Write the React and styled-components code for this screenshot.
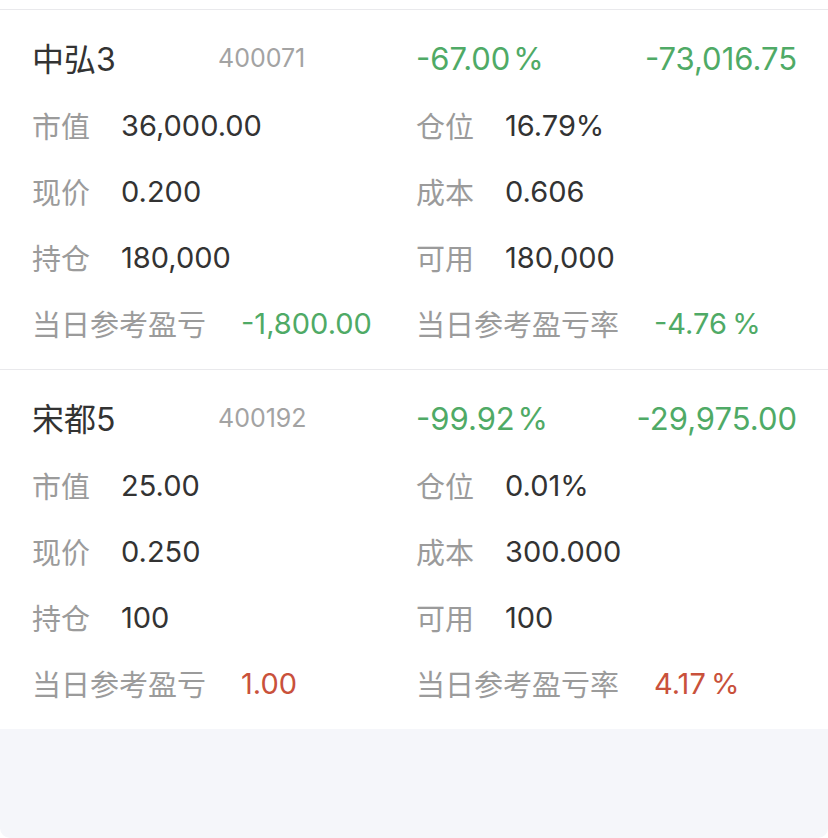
import React from "react";
import styled, { createGlobalStyle } from "styled-components";

const GlobalStyle = createGlobalStyle`
  html, body { margin: 0; padding: 0; background: #ffffff; }
  body { font-family: "Inter", "Noto Sans CJK SC", sans-serif; -webkit-font-smoothing: antialiased; }
  * { box-sizing: border-box; }
`;

const Page = styled.div`
  height: 838px;
  background: #f5f6fa;
  border-radius: 0 0 10px 10px;
  overflow: hidden;
  display: flex;
  flex-direction: column;
`;

const TopSpacer = styled.div`
  height: 9px;
  background: #ffffff;
`;

const Card = styled.section`
  background: #ffffff;
  border-top: 1px solid #e9e9ec;
  padding: 14px 0 13px;
`;

const TitleRow = styled.div`
  display: grid;
  grid-template-columns: 414px 414px;
  height: 68px;
  align-items: center;
`;

const TitleLeft = styled.div`
  display: flex;
  align-items: center;
  padding-left: 32px;
`;

const Name = styled.span`
  width: 186px;
  font-size: 32px;
  color: #333333;
  margin-top: -2px;
`;

const Code = styled.span`
  font-size: 25px;
  color: #a3a3a3;
`;

const TitleRight = styled.div`
  display: flex;
  align-items: center;
  justify-content: space-between;
  padding: 0 31px 0 2px;
`;

const Change = styled.span`
  font-size: 31px;
  color: ${(p) => (p.$up ? "#c9513b" : "#4faa66")};
`;

const Row = styled.div`
  display: grid;
  grid-template-columns: 414px 414px;
  height: 66px;
  align-items: center;
`;

const Cell = styled.div`
  display: flex;
  align-items: center;
  padding-left: ${(p) => (p.$right ? "2px" : "32px")};
`;

const Label = styled.span`
  font-size: 29px;
  color: #9b9b9b;
  min-width: 58px;
  margin-right: ${(p) => (p.$long ? "35px" : "31px")};
`;

const Value = styled.span`
  font-size: 29px;
  color: ${(p) => (p.$tone === "up" ? "#c9513b" : p.$tone === "down" ? "#4faa66" : "#333333")};
`;

const T = "\u2009";
const H = "\u200A";

const stocks = [
  {
    name: "中弘3",
    code: "400071",
    pct: `-67.00${H}%`,
    amount: "-73,016.75",
    up: false,
    rows: [
      ["市值", "36,000.00", "仓位", "16.79%"],
      ["现价", "0.200", "成本", "0.606"],
      ["持仓", "180,000", "可用", "180,000"],
    ],
    day: "-1,800.00",
    dayRate: `-4.76${T}%`,
  },
  {
    name: "宋都5",
    code: "400192",
    pct: `-99.92${H}%`,
    amount: "-29,975.00",
    up: false,
    rows: [
      ["市值", "25.00", "仓位", "0.01%"],
      ["现价", "0.250", "成本", "300.000"],
      ["持仓", "100", "可用", "100"],
    ],
    day: "1.00",
    dayRate: `4.17${T}%`,
    dayUp: true,
  },
];

function StockCard({ s }) {
  const tone = s.dayUp ? "up" : "down";
  return (
    <Card>
      <TitleRow>
        <TitleLeft>
          <Name>{s.name}</Name>
          <Code>{s.code}</Code>
        </TitleLeft>
        <TitleRight>
          <Change $up={s.up}>{s.pct}</Change>
          <Change $up={s.up}>{s.amount}</Change>
        </TitleRight>
      </TitleRow>
      {s.rows.map((r) => (
        <Row key={r[0]}>
          <Cell>
            <Label>{r[0]}</Label>
            <Value>{r[1]}</Value>
          </Cell>
          <Cell $right>
            <Label>{r[2]}</Label>
            <Value>{r[3]}</Value>
          </Cell>
        </Row>
      ))}
      <Row>
        <Cell>
          <Label $long>当日参考盈亏</Label>
          <Value $tone={tone}>{s.day}</Value>
        </Cell>
        <Cell $right>
          <Label $long>当日参考盈亏率</Label>
          <Value $tone={tone}>{s.dayRate}</Value>
        </Cell>
      </Row>
    </Card>
  );
}

export default function App() {
  return (
    <>
      <GlobalStyle />
      <Page>
        <TopSpacer />
        {stocks.map((s) => (
          <StockCard key={s.code} s={s} />
        ))}
      </Page>
    </>
  );
}
